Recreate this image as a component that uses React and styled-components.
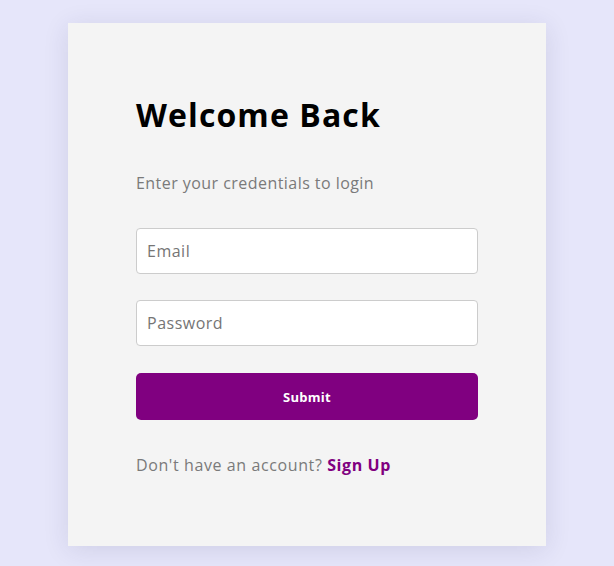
import React, {useState} from 'react';
import styled, {createGlobalStyle} from 'styled-components'

const GlobalStyle = createGlobalStyle`
  * {
    box-sizing: border-box;
  }
  body {
    margin: 0;
    background-color: #e6e6fa;
    font-family: "Open Sans", "Noto Sans", sans-serif;
  }
`
const Page = styled.div`
  min-height: 100vh;
  padding-top: 23px;
  display: flex;
  align-items: flex-start;
  justify-content: center;
`
const Card = styled.div`
  width: 478px;
  padding: 69px 68px;
  background-color: #f4f4f4;
  box-shadow: 0 4px 24px rgba(40, 40, 90, 0.12);
  display: flex;
  flex-direction: column;
`
const Title = styled.h1`
  margin: 0;
  font-size: 32px;
  line-height: 46px;
  font-weight: 700;
  letter-spacing: 1.1px;
  color: #000;
`
const Subtitle = styled.p`
  margin: 33px 0 33px;
  font-size: 16px;
  line-height: 24px;
  letter-spacing: 0.45px;
  color: #7a7a7a;
`
const Form = styled.form`
  display: flex;
  flex-direction: column;
  gap: 26px;
`
const Input = styled.input`
  width: 100%;
  height: 46px;
  padding: 0 10px;
  border: 1px solid #cccccc;
  border-radius: 4px;
  background-color: #fff;
  font-family: inherit;
  font-size: 16px;
  letter-spacing: 0.5px;
  color: #333;
  outline: none;
  ::placeholder {
    color: #777;
  }
`
const SubmitButton = styled.button`
  height: 47px;
  margin-top: 1px;
  border: none;
  border-radius: 5px;
  background-color: #800080;
  color: #fff;
  font-family: inherit;
  font-size: 13px;
  font-weight: 700;
  letter-spacing: 0.3px;
  cursor: pointer;
`
const Footer = styled.p`
  margin: 33px 0 0;
  font-size: 16px;
  line-height: 24px;
  letter-spacing: 0.6px;
  color: #7a7a7a;
`
const SignUp = styled.a`
  color: #800080;
  font-weight: 700;
  text-decoration: none;
  cursor: pointer;
`

function App() {
  const [form, setForm] = useState({email: "", password: ""})

  const handleInputChange = event => {
    const {name, value} = event.target
    setForm({...form, [name]: value})
  }

  return (
    <Page>
      <GlobalStyle />
      <Card>
        <Title>Welcome Back</Title>
        <Subtitle>Enter your credentials to login</Subtitle>
        <Form onSubmit={e => e.preventDefault()}>
          <Input
            name="email"
            type="email"
            placeholder="Email"
            value={form.email}
            onChange={handleInputChange}
          />
          <Input
            name="password"
            type="password"
            placeholder="Password"
            value={form.password}
            onChange={handleInputChange}
          />
          <SubmitButton>Submit</SubmitButton>
        </Form>
        <Footer>Don't have an account? <SignUp>Sign Up</SignUp></Footer>
      </Card>
    </Page>
  );
}

export default App;
